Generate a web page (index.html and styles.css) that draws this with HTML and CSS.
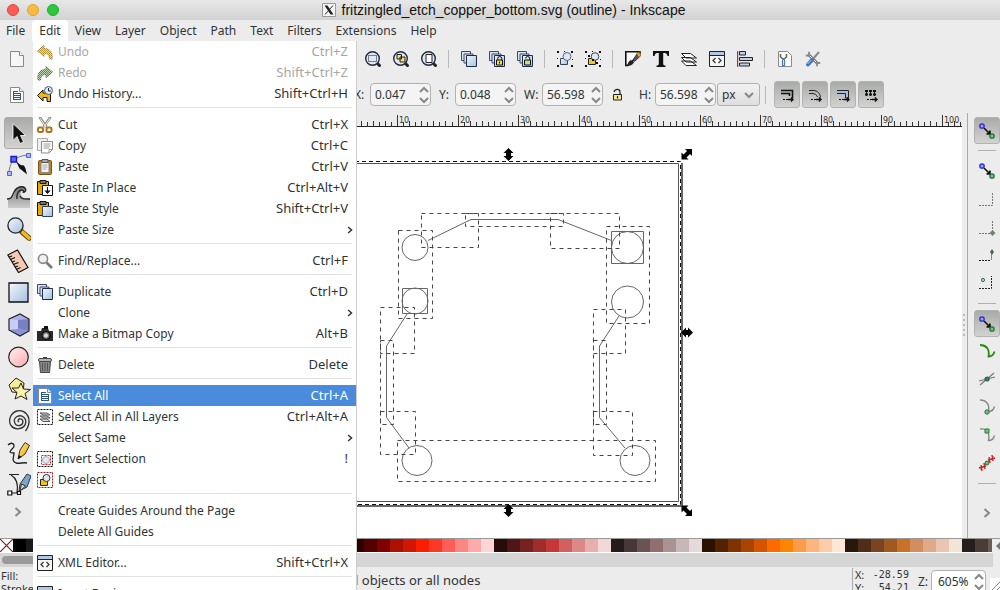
FILE: index.html
```html
<!DOCTYPE html>
<html lang="en">
<head>
<meta charset="utf-8">
<title>fritzingled_etch_copper_bottom.svg (outline) - Inkscape</title>
<link rel="stylesheet" href="styles.css">
</head>
<body>
<svg class="defs" aria-hidden="true">
  <defs>
    <linearGradient id="blue" x1="0" y1="0" x2="1" y2="1"><stop offset="0" stop-color="#f4f8fd"/><stop offset="1" stop-color="#a3bfe0"/></linearGradient>
    <linearGradient id="pink" x1="0" y1="0" x2="1" y2="1"><stop offset="0" stop-color="#fff0f0"/><stop offset="1" stop-color="#ffa9b0"/></linearGradient>
    <linearGradient id="gold" x1="0" y1="0" x2="1" y2="1"><stop offset="0" stop-color="#ffe680"/><stop offset="1" stop-color="#f0a800"/></linearGradient>
    <linearGradient id="sea" x1="0" y1="0" x2="0" y2="1"><stop offset="0" stop-color="#777"/><stop offset="1" stop-color="#ccc"/></linearGradient>
    <pattern id="stipple" width="2" height="2" patternUnits="userSpaceOnUse"><path d="M0 0h1v1H0zM1 1h1v1H1z" fill="#fff" fill-opacity=".6"/></pattern>
    <symbol id="page" viewBox="0 0 16 16"><path d="M1.500 .5h9l4 4v11h-13z" fill="#f6f6f4" stroke="#888a85"/><path d="M10.500 .5v4h4" fill="#fff" stroke="#888a85"/></symbol>
    <symbol id="doc" viewBox="0 0 16 16"><path d="M1.500 .5h9l4 4v11h-13z" fill="#fff" stroke="#888a85"/><path d="M10.500 .5v4h4" fill="#eee" stroke="#888a85"/><path d="M4 4.500h5M4 6.500h8M4 8.500h8M4 10.500h8M4 12.500h8M4.500 4v9M11.500 6v7" stroke="#2a5596" fill="none"/></symbol>
    <symbol id="undo" viewBox="0 0 16 16"><path d="M.5 7 7 1.500v3c5 0 9 3 8 10.500h-2.500c0-4-2-5.500-5.500-5.500v3z" fill="#b99b2e" stroke="#8f7a36"/><path d="M0 0h16v16H0z" fill="url(#stipple)"/></symbol>
    <symbol id="redo" viewBox="0 0 16 16"><path d="M15.500 7 9 1.500v3C4 4.500 0 7.500 1 15h2.500c0-4 2-5.500 5.500-5.500v3z" fill="#59933a" stroke="#476d33"/><path d="M0 0h16v16H0z" fill="url(#stipple)"/></symbol>
    <symbol id="history" viewBox="0 0 16 16"><path d="M.5 9.500 6 4v3h7.500v8.500H10V11.500H6V15z" fill="#f5b800" stroke="#111"/><circle cx="11.500" cy="4.500" r="4" fill="#dce8f6" stroke="#46597a"/><path d="M11.500 2v3h2.500" fill="none" stroke="#223"/></symbol>
    <symbol id="cut" viewBox="0 0 16 16"><path d="M2.500 0 9.500 10M13.500 0 6.500 10" stroke="#888a85" stroke-width="2.600"/><path d="M3 1 9 10M13 1 7 10" stroke="#eee"/><rect x="1" y="10.500" width="5" height="4.500" rx="1.500" fill="none" stroke="#b07418" stroke-width="2"/><rect x="9.500" y="10.500" width="5" height="4.500" rx="1.500" fill="none" stroke="#b07418" stroke-width="2"/></symbol>
    <symbol id="copy" viewBox="0 0 16 16"><path d="M.5 .5h10v12H.5z" fill="#f0f0ee" stroke="#aaa"/><path d="M4.500 3.500h11v8l-3.500 3.500H4.500z" fill="#fff" stroke="#888a85"/><path d="M6.500 6h7M6.500 8h7M6.500 10h6M12 15v-3.500h3.500" stroke="#999" fill="none"/></symbol>
    <symbol id="paste" viewBox="0 0 16 16"><rect x="1.500" y="1.500" width="13" height="14" rx="1" fill="#b5842b" stroke="#7c5310"/><path d="M4 3.500h8v10H4z" fill="#f3f3f1" stroke="#888"/><path d="M5 .5h6v3H5z" fill="#aaa" stroke="#555"/><path d="M5.500 6h5M5.500 8h5M5.500 10h4" stroke="#aaa"/></symbol>
    <symbol id="place" viewBox="0 0 16 16"><path d="M.5 1.500h11v13H.5z" fill="#eaa900" stroke="#111"/><path d="M3 .5h6v3H3z" fill="#777" stroke="#111"/><path d="M5.500 5.500h10v10h-10z" fill="#fff" stroke="#111"/><path d="M10.500 7v6M8 10.500l2.500 3 2.500-3" fill="#111" stroke="#111"/></symbol>
    <symbol id="style" viewBox="0 0 16 16"><path d="M.5 1.500h11v13H.5z" fill="#eaa900" stroke="#111"/><path d="M3 .5h6v3H3z" fill="#777" stroke="#111"/><path d="M5.500 5.500h10v10h-10z" fill="url(#blue)" stroke="#345"/></symbol>
    <symbol id="find" viewBox="0 0 16 16"><path d="m9.500 9.500 5.500 5.500" stroke="#777" stroke-width="2.600"/><circle cx="6" cy="5.800" r="4.600" fill="#eef2f7" stroke="#888a85" stroke-width="1.600"/></symbol>
    <symbol id="dup" viewBox="0 0 16 16"><path d="M.5 .5h9v9h-9z" fill="#d7e3f1" stroke="#3c4a66"/><path d="M3 3h9v9H3z" fill="#d7e3f1" stroke="#3c4a66"/><path d="M5.500 4.500h10v11h-10z" fill="url(#blue)" stroke="#1c2c4a"/></symbol>
    <symbol id="camera" viewBox="0 0 16 16"><path d="M0 5h4l1-3h6l1 3h4v10H0z" fill="#2a2a2a"/><path d="M7 0h4v3H7z" fill="#111"/><circle cx="9" cy="9.500" r="4" fill="#777" stroke="#000"/><circle cx="9" cy="9.500" r="2" fill="#ddd"/></symbol>
    <symbol id="trash" viewBox="0 0 16 16"><path d="M2.500 4.500h11l-1 11h-9z" fill="#888a85" stroke="#444"/><rect x="1.500" y="1.500" width="13" height="3" rx="1.500" fill="#b5b7b3" stroke="#444"/><path d="M5.500 6v8M8 6v8M10.500 6v8" stroke="#555"/><path d="M6 .5h4" stroke="#444"/></symbol>
    <symbol id="sellayers" viewBox="0 0 16 16"><path d="M.5 .5h15v15H.5z" fill="none" stroke="#111" stroke-dasharray="2 1"/><path d="M3 4h7l3 2H6zM3 7h7l3 2H6zM3 10h7l3 2.500H6z" fill="#ddd" stroke="#555"/></symbol>
    <symbol id="invert" viewBox="0 0 16 16"><path d="M.5 .5h15v15H.5z" fill="none" stroke="#111" stroke-dasharray="2 1"/><path d="M4.500 4.500h9v9h-9z" fill="none" stroke="#c22" stroke-dasharray="2 1"/><circle cx="9" cy="9" r="3.500" fill="#e4e8f0" stroke="#a5adbb"/></symbol>
    <symbol id="desel" viewBox="0 0 16 16"><path d="M.5 .5h15v15H.5z" fill="none" stroke="#a11" stroke-dasharray="2 1"/><path d="M3.500 7.500h7v6h-7z" fill="#f5c400" stroke="#222"/><circle cx="9.500" cy="6" r="3.500" fill="#dce8f6" stroke="#335"/></symbol>
    <symbol id="xml" viewBox="0 0 16 16"><path d="M.5 .5h15v15H.5z" fill="#f6f6f6" stroke="#222"/><path d="M1 1h14v3H1z" fill="#b4c8e4"/><path d="M1 4.500h14" stroke="#222"/><path d="M6.500 7 4 9.500 6.500 12M9.500 7 12 9.500 9.500 12" fill="none" stroke="#333" stroke-width="1.200"/></symbol>
    <symbol id="zoom" viewBox="0 0 16 16"><path d="m12 12 3.500 3.500" stroke="#222" stroke-width="3"/><circle cx="7.500" cy="7.500" r="6.800" fill="#dfe9f5" stroke="#1f2a3c" stroke-width="1.400"/></symbol>
    <symbol id="zoomsel" viewBox="0 0 16 16"><use href="#zoom"/><path d="M3.500 4.500h8v6h-8z" fill="none" stroke="#111" stroke-dasharray="1 1"/></symbol>
    <symbol id="zoomdraw" viewBox="0 0 16 16"><use href="#zoom"/><path d="M4 3.500h4.500V8H4zM7 6h5v5H7z" fill="#f8db7a" stroke="#222"/></symbol>
    <symbol id="zoompage" viewBox="0 0 16 16"><use href="#zoom"/><path d="M5 3.500h6v8H5z" fill="#fff" stroke="#222"/></symbol>
    <symbol id="clone" viewBox="0 0 16 16"><use href="#dup"/><path d="M7.500 9h6v5h-6z" fill="#f8dc45" stroke="#111"/><path d="M8.700 9V7.500a2 2 0 0 1 4 0V9M10.500 10.500v2" fill="none" stroke="#111"/></symbol>
    <symbol id="unlink" viewBox="0 0 16 16"><use href="#dup"/><path d="M7.500 9h6v5h-6z" fill="#c5e08a" stroke="#111"/><path d="M8.700 7.500a2 2 0 0 1 4 0V9" fill="none" stroke="#111"/></symbol>
    <symbol id="corners" viewBox="0 0 16 16"><path d="M0 0h2v2H0zM14 0h2v2h-2zM0 14h2v2H0zM14 14h2v2h-2zM7 0h1v1H7zM0 7h1v1H0zM15 8h1v1h-1z" fill="#111"/></symbol>
    <symbol id="group" viewBox="0 0 16 16"><use href="#corners"/><path d="M3.500 7.500h7v6h-7z" fill="url(#blue)" stroke="#345"/><circle cx="10" cy="5.500" r="4" fill="#dce8f6" stroke="#567"/></symbol>
    <symbol id="ungroup" viewBox="0 0 16 16"><use href="#corners"/><path d="M3.500 7.500h7v6h-7z" fill="#f5c820" stroke="#222"/><circle cx="10" cy="5.500" r="3.800" fill="#dce8f6" stroke="#444"/><path d="M7 8h2v2H7zM3 4h2v2H3zM11 11h2v2h-2z" fill="#111"/></symbol>
    <symbol id="fill" viewBox="0 0 16 16"><path d="M.8 .8h13v3L3 14.500H.8z" fill="#fff" stroke="#111" stroke-width="1.600"/><path d="M1 15c2-1 2-5 5-6l3 2c-1 3-4 4-8 4z" fill="#222"/><path d="m8 9 5-8 2.500-1v5L9.500 10.500z" fill="#555" stroke="#111" stroke-width=".6"/><path d="m13 1 3 3-2 2-2-3z" fill="#f3a90d"/></symbol>
    <symbol id="text" viewBox="0 0 16 16"><path d="M0 0h16v5h-1.500C14 2.500 13 2 10.200 2v10.500c0 1.500.6 2 2.300 2V16h-9v-1.500c1.700 0 2.300-.5 2.300-2V2C3 2 2 2.500 1.500 5H0z" fill="#111"/></symbol>
    <symbol id="layers" viewBox="0 0 16 16"><path d="M.5 10h9l6 4.500H5zM.5 6.500h9L15.500 11H5zM.5 2.500h9l6 4.500H5z" fill="#fff" stroke="#222"/></symbol>
    <symbol id="align" viewBox="0 0 16 16"><path d="M.5 0v16" stroke="#c22" stroke-width="1.400"/><path d="M2.500 .5h6v3.500h-6zM2.500 6.500h13v3h-13zM2.500 12h10v3h-10z" fill="#bcd2ea" stroke="#222"/></symbol>
    <symbol id="docprefs" viewBox="0 0 16 16"><path d="M1.500 .5h9l4 4v11h-13z" fill="#fff" stroke="#888a85"/><path d="M3.500 3v3L6.500 8.500 9.500 6V3" fill="none" stroke="#666" stroke-width="1.600"/><path d="M6.500 10v4" stroke="#4a7ab8" stroke-width="3.400" stroke-linecap="round"/><path d="M6.500 9v5" stroke="#cfe0f5"/></symbol>
    <symbol id="prefs" viewBox="0 0 16 16"><path d="m3.500 3.500 9 9" stroke="#777" stroke-width="3"/><path d="m4 4 8 8" stroke="#eee"/><path d="M.8 4.500H4V.8M12 15.200V12h3.200" stroke="#888" stroke-width="1.800" fill="none"/><path d="m14 1-6 7" stroke="#888" stroke-width="2"/><path d="m7 9-4 4.500" stroke="#3a73c4" stroke-width="3.800" stroke-linecap="round"/><path d="m6.500 9-4 4" stroke="#bcd4f3"/></symbol>
    <symbol id="lock" viewBox="0 0 16 16"><path d="M4.500 7.500h8v5.500h-8z" fill="#f8e88c" stroke="#222"/><path d="M5 5c1-3.500 6-3.500 6 0v2.500M8.500 9v2.500" stroke="#222" fill="none" stroke-width="1.200"/></symbol>
    <symbol id="dots" viewBox="0 0 16 16"><path d="M4 12.500h6" stroke="#111" stroke-dasharray="2 1"/><path d="M9 12.500h5M12 10.500l2 2-2 2" fill="none" stroke="#111" stroke-width="1.400"/></symbol>
    <symbol id="a1" viewBox="0 0 16 16"><path d="M2 3.500h11.500V11M2 6.500h8.500V9" stroke="#111" stroke-width="1.600" fill="none"/><use href="#dots"/></symbol>
    <symbol id="a2" viewBox="0 0 16 16"><path d="M2 3.500h4c5 0 7 3 7.500 7M2 6.500h3c3 0 5 1.500 5.500 3.500" stroke="#222" fill="none"/><use href="#dots"/></symbol>
    <symbol id="a3" viewBox="0 0 16 16"><path d="M2 3.500h11.500V11h-3V6.500H2" stroke="#222" fill="#9fc0e8"/><use href="#dots"/></symbol>
    <symbol id="a4" viewBox="0 0 16 16"><path d="M2 4h12M2 7.500h12" stroke="#111" stroke-dasharray="3 1" stroke-width="2.200"/><path d="M3.500 3v6M7.500 3v6M11.500 3v6" stroke="#111"/><use href="#dots"/></symbol>
    <symbol id="snap" viewBox="0 0 18 18"><path d="m6 6 6 6M12 8.500V12H8.500" stroke="#111" stroke-width="1.600" fill="#111"/><circle cx="4" cy="4" r="2.200" fill="#9c9cff" stroke="#2a2ad0" stroke-width="1.300"/><circle cx="14" cy="14" r="2.200" fill="#7bb98a" stroke="#26753b" stroke-width="1.300"/></symbol>
    <symbol id="s1" viewBox="0 0 18 18"><path d="M1 15.500h13.500V2" stroke="#777" fill="none" stroke-dasharray="2 1"/></symbol>
    <symbol id="s2" viewBox="0 0 18 18"><path d="M1 15.500h13.500V2" stroke="#777" fill="none" stroke-dasharray="2 1"/><path d="m14.500 12 3 3-3 3-3-3z" fill="#6c8571"/></symbol>
    <symbol id="s3" viewBox="0 0 18 18"><path d="M1 14.500h12" stroke="#222" fill="none" stroke-dasharray="2 1"/><path d="M13.500 14V8" stroke="#888"/><path d="m14 3 2 3-2 3-2-3z" fill="#4a654f"/></symbol>
    <symbol id="s4" viewBox="0 0 18 18"><path d="M1 14.500h12.500V2" stroke="#222" fill="none" stroke-dasharray="2 1"/><circle cx="5" cy="6" r="1.600" fill="#b6d3bd" stroke="#4a654f"/></symbol>
    <symbol id="p1" viewBox="0 0 18 18"><path d="M2 3c6 0 10 4 8.500 11.500 3 0 5-1 6-5" fill="none" stroke="#2a8a12" stroke-width="1.800"/></symbol>
    <symbol id="p2" viewBox="0 0 18 18"><path d="M2 15 16 3M1 11l16-4" stroke="#777" stroke-width="1.200"/><circle cx="9" cy="9" r="2" fill="#46a" stroke="#26752b" stroke-width="1.200"/></symbol>
    <symbol id="p3" viewBox="0 0 18 18"><path d="M2 2c6 0 10 4 8.500 11.500 3 0 5-1 6-5" fill="none" stroke="#888" stroke-width="1.400"/><circle cx="9" cy="14" r="2.200" fill="#7bb98a" stroke="#26753b"/></symbol>
    <symbol id="p4" viewBox="0 0 18 18"><path d="M2 3c7-1 10 4 8.500 11.500 3 0 5-1 6-5" fill="none" stroke="#888" stroke-width="1.400"/><path d="M7 3h4v4H7z" fill="#7bb98a" stroke="#1c8a1c"/></symbol>
    <symbol id="p5" viewBox="0 0 18 18"><path d="M2 16 16 2" stroke="#999"/><path d="m3 11 1 6M6 9l1 6M1 14l7-2M11 3l1 6M14 1l1 6M10 6l7-2" stroke="#c22" stroke-width="1.400"/><circle cx="9" cy="9" r="2" fill="#7bb98a" stroke="#26753b"/></symbol>
    <symbol id="right" viewBox="0 0 16 16"><path d="m5.500 4 4.500 4-4.500 4" fill="none" stroke="currentColor" stroke-width="2"/></symbol>
    <symbol id="t-arrow" viewBox="0 0 24 24"><path d="M6 2.500v17l4-4 3 7 3.500-1.500-3-6.500h5z" fill="#111" stroke="#fff" stroke-width=".8"/></symbol>
    <symbol id="t-node" viewBox="0 0 24 24"><path d="M2 21C2 10 7 3 21 2" fill="none" stroke="#777"/><path d="M.5 18.500h4v4h-4zM19.500 .5h4v4h-4z" fill="#aab4ff" stroke="#5560d8"/><path d="M4 3.500h5.500V9H4z" fill="#5a6cf0" stroke="#1818c8" stroke-width="1.400"/><path d="m9 8 3.500 7.500 1.500 1 6 5-1.500-6-1.500-3-3.500-.5z" fill="#111"/></symbol>
    <symbol id="t-tweak" viewBox="0 0 24 24"><path d="M1 23V14c5 0 5-4 7-8 2-5 8-5 10-3 2 1.500 1 5-1.500 4 .5-2-2.500-2-3 1 0 4 3 6 9.500 6v9z" fill="url(#sea)"/><path d="M0 14c5 0 5-3 7-7 3-6 9-6 11-4 2 2 0 5-2.500 4M10 14c-1-9 6-11 7-7M13 11c1 3 4 3 10 3" fill="none" stroke="#222" stroke-width="1.300"/></symbol>
    <symbol id="t-zoom" viewBox="0 0 24 24"><path d="m15 15 7 6" stroke="#6b4b00" stroke-width="5.500" stroke-linecap="round"/><path d="m16 15.500 6 5.500" stroke="#f4b91c" stroke-width="3.600" stroke-linecap="round"/><circle cx="8.500" cy="8.500" r="7.600" fill="url(#blue)" stroke="#222" stroke-width="1.300"/></symbol>
    <symbol id="t-measure" viewBox="0 0 24 24"><path d="m.8 6 9.700-5L21 18.500 11.500 23.500z" fill="#f5c9b3" stroke="#111" stroke-width="1.200"/><path d="m2 8 3-1M3.500 10.500 8 8.500M5 13l3-1M6.500 15.500l5-2M8 18l3-1M9.500 20.500l4-2" stroke="#111" stroke-width="1.200"/></symbol>
    <symbol id="t-rect" viewBox="0 0 24 24"><path d="M2 2h19v19H2z" fill="url(#blue)" stroke="#111" stroke-width="1.300"/></symbol>
    <symbol id="t-box" viewBox="0 0 24 24"><path d="M2 6 13 1l9 5v12l-9 5-11-6z" fill="#8c93d8"/><path d="m2 6 9-1.500V16l-9 1z" fill="#c9cdf5"/><path d="m11 4.500 11 1.500v12l-11-3z" fill="#7880c4"/><path d="M2 6 13 1l9 5-11 1z" fill="#aab0ea"/><path d="M2 6 13 1l9 5v12l-9 5-11-6z" fill="none" stroke="#222" stroke-width="1.200"/></symbol>
    <symbol id="t-circle" viewBox="0 0 24 24"><circle cx="11.500" cy="12" r="9.800" fill="url(#pink)" stroke="#222" stroke-width="1.200"/></symbol>
    <symbol id="t-star" viewBox="0 0 24 24"><path d="M2 8 9 1l8 5-1 10-11-1z" fill="#f7ec98" stroke="#222"/><path d="m14 6 2.500 6 7 .5-5.500 4 2 6-6-3.500-6 3 2-6.500-5-4.500h6.500z" fill="#fbf3a5" stroke="#222"/></symbol>
    <symbol id="t-spiral" viewBox="0 0 24 24"><path d="M12 13c-2-1-.5-4 2-3 3 1 2.500 6-1.500 6.500C7 17 5.500 10 10 7.500c5-2.500 10 2 8.500 7C17 20 8 22 4 16.500.5 11 4 3.500 10 2c7-1.500 14 4 11.500 14-.5 2-1.500 4-3 6" fill="none" stroke="#333" stroke-width="1.300"/></symbol>
    <symbol id="t-pencil" viewBox="0 0 24 24"><path d="M1 4c4-4 8 0 5 3-4 4-4 5 1 5 0 4-3 8 2 10 4 1 7-1 11 0" fill="none" stroke="#222" stroke-width="1.300"/><path d="m11 18 2-9 5-7.500 4.500 3L18 13z" fill="url(#gold)" stroke="#333"/><path d="m11 18 .8-4 3 2z" fill="#111"/></symbol>
    <symbol id="t-pen" viewBox="0 0 24 24"><path d="M2 1.500h10M4 2c7 4 7 12 6 18H3" fill="none" stroke="#222" stroke-width="1.200"/><path d="M.8 18h4v4h-4zM10.500 18.500h3v3h-3z" fill="#fff" stroke="#111" stroke-width="1.200"/><path d="m12 18 1-7 7-10 4 2-4 11z" fill="#7ba6cc" stroke="#333"/><path d="m13 18 1.500-7 4 2z" fill="#ddd" stroke="#333"/></symbol>
  </defs>
</svg>

<div class="app">
  <header class="titlebar">
    <div class="lights"><span class="light light-close"></span><span class="light light-min"></span><span class="light light-max"></span></div>
    <h1 class="title">
      <svg class="x11" viewBox="0 0 14 14" aria-hidden="true"><path d="M.5 .5h13v13H.5z" fill="#f6f6f6" stroke="#999"/><path d="M2.500 2.500h3l6 9h-3z" fill="#222"/><path d="M11 2.500 3 11.500" stroke="#222"/></svg>
      fritzingled_etch_copper_bottom.svg (outline) - Inkscape
    </h1>
  </header>

  <nav class="menubar">
    <button class="menu-title">File</button><button class="menu-title is-open">Edit</button><button class="menu-title">View</button><button class="menu-title">Layer</button><button class="menu-title">Object</button><button class="menu-title">Path</button><button class="menu-title">Text</button><button class="menu-title">Filters</button><button class="menu-title">Extensions</button><button class="menu-title">Help</button>
  </nav>

  <div class="toolbar commands">
    <button class="tool-btn lead" aria-label="New"><svg class="i16"><use href="#page"/></svg></button>
    <button class="tool-btn" aria-label="Zoom selection"><svg class="i16"><use href="#zoomsel"/></svg></button>
    <button class="tool-btn" aria-label="Zoom drawing"><svg class="i16"><use href="#zoomdraw"/></svg></button>
    <button class="tool-btn" aria-label="Zoom page"><svg class="i16"><use href="#zoompage"/></svg></button>
    <span class="vsep"></span>
    <button class="tool-btn" aria-label="Duplicate"><svg class="i16"><use href="#dup"/></svg></button>
    <button class="tool-btn" aria-label="Clone"><svg class="i16"><use href="#clone"/></svg></button>
    <button class="tool-btn" aria-label="Unlink clone"><svg class="i16"><use href="#unlink"/></svg></button>
    <span class="vsep"></span>
    <button class="tool-btn" aria-label="Group"><svg class="i16"><use href="#group"/></svg></button>
    <button class="tool-btn" aria-label="Ungroup"><svg class="i16"><use href="#ungroup"/></svg></button>
    <span class="vsep"></span>
    <button class="tool-btn" aria-label="Fill and stroke"><svg class="i16"><use href="#fill"/></svg></button>
    <button class="tool-btn" aria-label="Text and font"><svg class="i16"><use href="#text"/></svg></button>
    <button class="tool-btn" aria-label="Layers"><svg class="i16"><use href="#layers"/></svg></button>
    <button class="tool-btn" aria-label="XML editor"><svg class="i16"><use href="#xml"/></svg></button>
    <button class="tool-btn" aria-label="Align"><svg class="i16"><use href="#align"/></svg></button>
    <span class="vsep"></span>
    <button class="tool-btn" aria-label="Document properties"><svg class="i16"><use href="#docprefs"/></svg></button>
    <button class="tool-btn" aria-label="Preferences"><svg class="i16"><use href="#prefs"/></svg></button>
  </div>

  <div class="toolbar controls">
    <button class="tool-btn lead" aria-label="Select all"><svg class="i16"><use href="#doc"/></svg></button>
    <div class="field"><label for="fx">X:</label><span class="spin"><input id="fx" value="0.047"><svg class="arrows" viewBox="0 0 12 20"><path d="m2 7 4-4 4 4M2 13l4 4 4-4"/></svg></span></div>
    <div class="field"><label for="fy">Y:</label><span class="spin"><input id="fy" value="0.048"><svg class="arrows" viewBox="0 0 12 20"><path d="m2 7 4-4 4 4M2 13l4 4 4-4"/></svg></span></div>
    <div class="field"><label for="fw">W:</label><span class="spin"><input id="fw" value="56.598"><svg class="arrows" viewBox="0 0 12 20"><path d="m2 7 4-4 4 4M2 13l4 4 4-4"/></svg></span></div>
    <button class="lock-btn" aria-label="Lock ratio"><svg class="i16"><use href="#lock"/></svg></button>
    <div class="field"><label for="fh">H:</label><span class="spin"><input id="fh" value="56.598"><svg class="arrows" viewBox="0 0 12 20"><path d="m2 7 4-4 4 4M2 13l4 4 4-4"/></svg></span></div>
    <span class="unit"><select aria-label="Unit"><option>px</option></select><svg class="caret" viewBox="0 0 10 8"><path d="m1 2 4 4 4-4"/></svg></span>
    <span class="vsep"></span>
    <div class="affect">
      <button class="toggle" aria-label="Scale stroke"><svg class="i16"><use href="#a1"/></svg></button>
      <button class="toggle" aria-label="Scale corners"><svg class="i16"><use href="#a2"/></svg></button>
      <button class="toggle" aria-label="Move gradients"><svg class="i16"><use href="#a3"/></svg></button>
      <button class="toggle" aria-label="Move patterns"><svg class="i16"><use href="#a4"/></svg></button>
    </div>
  </div>

  <main class="workspace">
    <aside class="toolbox">
      <button class="tool is-on" aria-label="Selector"><svg class="i24"><use href="#t-arrow"/></svg></button>
      <button class="tool" aria-label="Node"><svg class="i24"><use href="#t-node"/></svg></button>
      <button class="tool" aria-label="Tweak"><svg class="i24"><use href="#t-tweak"/></svg></button>
      <button class="tool" aria-label="Zoom"><svg class="i24"><use href="#t-zoom"/></svg></button>
      <button class="tool" aria-label="Measure"><svg class="i24"><use href="#t-measure"/></svg></button>
      <button class="tool" aria-label="Rectangle"><svg class="i24"><use href="#t-rect"/></svg></button>
      <button class="tool" aria-label="3D box"><svg class="i24"><use href="#t-box"/></svg></button>
      <button class="tool" aria-label="Ellipse"><svg class="i24"><use href="#t-circle"/></svg></button>
      <button class="tool" aria-label="Star"><svg class="i24"><use href="#t-star"/></svg></button>
      <button class="tool" aria-label="Spiral"><svg class="i24"><use href="#t-spiral"/></svg></button>
      <button class="tool" aria-label="Pencil"><svg class="i24"><use href="#t-pencil"/></svg></button>
      <button class="tool" aria-label="Pen"><svg class="i24"><use href="#t-pen"/></svg></button>
      <button class="more" aria-label="More tools"><svg class="i16"><use href="#right"/></svg></button>
    </aside>

    <section class="document">
      <svg class="ruler" id="ruler"></svg>
      <svg class="canvas">
        <g transform="translate(-33 -127)">
          <g class="frame">
            <path class="thick" d="M33 506H682V163"/>
            <path d="M33 163.500H678.500V501.500H33"/>
            <path class="dash-b" d="M33 161.500H680.500V504.500H33"/>
          </g>
          <g class="outline">
            <circle cx="415" cy="247.500" r="13"/><circle cx="415" cy="301" r="13"/><path d="M402.500 288.500h25v25h-25z"/>
            <circle cx="627.500" cy="247.500" r="16"/><path d="M611.500 231.500h32v32h-32z"/><circle cx="627.500" cy="302" r="16"/>
            <circle cx="417" cy="460.500" r="15"/><circle cx="635" cy="460.500" r="15"/>
            <path d="M428 240.500 471 219.500H558L611.500 240.500"/>
            <path d="M407 314 386.500 346V417.500L409 448"/>
            <path d="M619 316 599.500 346V417.500L625 448"/>
          </g>
          <g class="boxes">
            <path d="M421.500 213.500h57v34h-57z"/><path d="M465.500 213.500h98v13h-98z"/><path d="M550.500 213.500h69v35h-69z"/>
            <path d="M398.500 230.500h34v88h-34z"/><path d="M606.500 226.500h43v97h-43z"/>
            <path d="M380.500 307.500h34v46h-34z"/><path d="M380.500 340.500h13v84h-13z"/><path d="M380.500 411.500h35v43h-35z"/>
            <path d="M397.500 440.500h258v41h-258z"/>
            <path d="M593.500 309.500h32v44h-32z"/><path d="M593.500 340.500h13v84h-13z"/><path d="M593.500 411.500h39v44h-39z"/>
          </g>
          <g class="handles">
            <path d="m508.500 148 5 5h-2.500v3h2.500l-5 5-5-5h2.500v-3h-2.500z"/>
            <path d="m508.500 504 5 5h-2.500v3h2.500l-5 5-5-5h2.500v-3h-2.500z"/>
            <path d="m681 332.500 5-5v2.500h2v-2.500l5 5-5 5V335h-2v2.500z"/>
            <path d="M685 149h7v7l-2-2-3.500 3.500 2 2H681.500v-7l2 2 3.500-3.500z"/>
            <path d="M685 516h7v-7l-2 2-3.500-3.500 2-2H681.500v7l2-2 3.500 3.500z"/>
          </g>
        </g>
      </svg>
    </section>

    <div class="grip"></div>

    <aside class="snapbar">
      <button class="toggle" aria-label="Enable snapping"><svg class="i18"><use href="#snap"/></svg></button>
      <span class="hsep"></span>
      <button class="snap" aria-label="Snap bounding box"><svg class="i18"><use href="#snap"/></svg></button>
      <button class="snap" aria-label="Snap edges"><svg class="i18"><use href="#s1"/></svg></button>
      <button class="snap" aria-label="Snap corners"><svg class="i18"><use href="#s2"/></svg></button>
      <button class="snap" aria-label="Snap edge midpoints"><svg class="i18"><use href="#s3"/></svg></button>
      <button class="snap" aria-label="Snap centers"><svg class="i18"><use href="#s4"/></svg></button>
      <span class="hsep"></span>
      <button class="toggle" aria-label="Snap nodes"><svg class="i18"><use href="#snap"/></svg></button>
      <button class="snap" aria-label="Snap to paths"><svg class="i18"><use href="#p1"/></svg></button>
      <button class="snap" aria-label="Snap intersections"><svg class="i18"><use href="#p2"/></svg></button>
      <button class="snap" aria-label="Snap cusp nodes"><svg class="i18"><use href="#p3"/></svg></button>
      <button class="snap" aria-label="Snap smooth nodes"><svg class="i18"><use href="#p4"/></svg></button>
      <button class="snap" aria-label="Snap midpoints"><svg class="i18"><use href="#p5"/></svg></button>
      <span class="hsep"></span>
      <button class="more" aria-label="More snapping"><svg class="i16"><use href="#right"/></svg></button>
    </aside>
  </main>

  <div class="palette-row">
    <div class="palette" id="palette"><svg class="none" viewBox="0 0 13 13"><path d="M0 0h13v13H0z" fill="#fff"/><path d="m0 0 13 13M13 0 0 13" stroke="#8b1a1a" stroke-width="1.200"/></svg></div>
    <button class="palette-menu" aria-label="Palette menu"><svg viewBox="0 0 8 10"><path d="M8 1 4 5l4 4" fill="#777"/></svg></button>
  </div>
  <div class="scroll"><span class="thumb"></span></div>

  <footer class="status">
    <div class="paint"><span>Fill:</span><span>Stroke:</span></div>
    <p class="message">Select all objects or all nodes</p>
    <dl class="coords"><dt>X:</dt><dd>-28.59</dd><dt>Y:</dt><dd>54.21</dd></dl>
    <div class="zoom-field"><label for="fz">Z:</label><span class="spin"><input id="fz" value="605%"><svg class="arrows" viewBox="0 0 12 20"><path d="m2 7 4-4 4 4M2 13l4 4 4-4"/></svg></span></div>
    <svg class="resize" viewBox="0 0 10 12"><path d="M0 0h10v12H0z" fill="#fff"/><path d="m2 12 8-8M7 12l3-3" stroke="#888"/></svg>
  </footer>

  <div class="menu" role="menu">
    <button class="item" disabled><svg class="i16"><use href="#undo"/></svg><span>Undo</span><kbd>Ctrl+Z</kbd></button>
    <button class="item" disabled><svg class="i16"><use href="#redo"/></svg><span>Redo</span><kbd>Shift+Ctrl+Z</kbd></button>
    <button class="item"><svg class="i16"><use href="#history"/></svg><span>Undo History...</span><kbd>Shift+Ctrl+H</kbd></button>
    <hr>
    <button class="item"><svg class="i16"><use href="#cut"/></svg><span>Cut</span><kbd>Ctrl+X</kbd></button>
    <button class="item"><svg class="i16"><use href="#copy"/></svg><span>Copy</span><kbd>Ctrl+C</kbd></button>
    <button class="item"><svg class="i16"><use href="#paste"/></svg><span>Paste</span><kbd>Ctrl+V</kbd></button>
    <button class="item"><svg class="i16"><use href="#place"/></svg><span>Paste In Place</span><kbd>Ctrl+Alt+V</kbd></button>
    <button class="item"><svg class="i16"><use href="#style"/></svg><span>Paste Style</span><kbd>Shift+Ctrl+V</kbd></button>
    <button class="item sub"><span>Paste Size</span><svg class="i12"><use href="#right"/></svg></button>
    <hr>
    <button class="item"><svg class="i16"><use href="#find"/></svg><span>Find/Replace...</span><kbd>Ctrl+F</kbd></button>
    <hr>
    <button class="item"><svg class="i16"><use href="#dup"/></svg><span>Duplicate</span><kbd>Ctrl+D</kbd></button>
    <button class="item sub"><span>Clone</span><svg class="i12"><use href="#right"/></svg></button>
    <button class="item"><svg class="i16"><use href="#camera"/></svg><span>Make a Bitmap Copy</span><kbd>Alt+B</kbd></button>
    <hr>
    <button class="item"><svg class="i16"><use href="#trash"/></svg><span>Delete</span><kbd>Delete</kbd></button>
    <hr>
    <button class="item is-active"><svg class="i16"><use href="#doc"/></svg><span>Select All</span><kbd>Ctrl+A</kbd></button>
    <button class="item"><svg class="i16"><use href="#sellayers"/></svg><span>Select All in All Layers</span><kbd>Ctrl+Alt+A</kbd></button>
    <button class="item sub"><span>Select Same</span><svg class="i12"><use href="#right"/></svg></button>
    <button class="item"><svg class="i16"><use href="#invert"/></svg><span>Invert Selection</span><kbd>!</kbd></button>
    <button class="item"><svg class="i16"><use href="#desel"/></svg><span>Deselect</span></button>
    <hr>
    <button class="item bare"><span>Create Guides Around the Page</span></button>
    <button class="item bare"><span>Delete All Guides</span></button>
    <hr>
    <button class="item"><svg class="i16"><use href="#xml"/></svg><span>XML Editor...</span><kbd>Shift+Ctrl+X</kbd></button>
    <hr>
    <button class="item"><svg class="i16"><use href="#xml"/></svg><span>Input Devices...</span></button>
  </div>
</div>
<script src="main.js"></script>
</body>
</html>
```
FILE: styles.css
```css
* { box-sizing: border-box; }
body { margin: 0; font: 13px/21px "Noto Sans", "Open Sans", sans-serif; color: #2e3436; background: #ececec; }
button, input, select { font: inherit; color: inherit; }
button { border: 0; padding: 0; background: none; }
svg { display: block; flex: none; }
.defs { position: absolute; width: 0; height: 0; }
.i12 { width: 12px; height: 12px; }
.i16 { width: 16px; height: 16px; }
.i18 { width: 18px; height: 18px; }
.i24 { width: 24px; height: 24px; }
.app { position: relative; display: flex; flex-direction: column; height: 100vh; overflow: hidden; }

.titlebar { flex: none; display: flex; align-items: center; height: 20px; background: linear-gradient(#e8e8e8, #d2d2d2); }
.lights { display: flex; gap: 8px; padding-left: 7px; flex: 1; }
.light { width: 12px; height: 12px; border-radius: 50%; border: 1px solid; }
.light-close { background: #fc5b57; border-color: #e2443f; }
.light-min { background: #fdbc40; border-color: #e0a133; }
.light-max { background: #2bc840; border-color: #1fad2e; }
.title { display: flex; align-items: center; gap: 6px; margin: 0; font: 14px/20px "Liberation Sans", Arial, sans-serif; color: #111; white-space: nowrap; }
.titlebar::after { content: ""; flex: 1; }
.x11 { width: 14px; height: 14px; }

.menubar { flex: none; display: flex; height: 21px; font-size: 12px; }
.menu-title { padding: 0 7px; line-height: 21px; border-radius: 4px 4px 0 0; }
.menu-title:first-child { padding-left: 6px; }
.menu-title.is-open { background: #fff; }

.toolbar { flex: none; display: flex; align-items: center; height: 36px; padding-left: 3px; }
.tool-btn { flex: none; display: grid; place-items: center; width: 28px; height: 28px; }
.commands .lead { margin-right: 328px; }
.controls { padding-bottom: 1px; }
.controls .lead { margin-right: 323px; }
.vsep { flex: none; width: 1px; height: 18px; margin: 0 6px 0 5px; background: #b8b8b8; }
.field { flex: none; display: flex; align-items: center; margin-right: 8px; font-size: 12px; }
.field label { width: 15px; margin-right: 1px; white-space: nowrap; }
.field label[for="fw"] { width: 17px; }
.spin { position: relative; display: block; width: 61px; height: 23px; flex: none; }
.spin input { width: 100%; height: 100%; padding: 0 16px 0 4px; font-size: 12px; border: 1px solid #b2b2b2; border-radius: 4px; background: #f4f4f4; }
.arrows { position: absolute; right: 1px; top: 2px; width: 12px; height: 20px; fill: none; stroke: #888; stroke-width: 2; }
.lock-btn { width: 16px; margin: 0 14px 0 -2px; }
.controls .field:nth-of-type(4) { margin-right: 1px; }
.unit { position: relative; display: block; width: 43px; height: 23px; flex: none; font-size: 12px; }
.unit select { appearance: none; width: 100%; height: 100%; padding: 0 4px; border: 1px solid #b2b2b2; border-radius: 3px; background: linear-gradient(#f2f2f2, #dedede); }
.caret { position: absolute; right: 6px; top: 8px; width: 10px; height: 8px; fill: none; stroke: #888; stroke-width: 2; }
.affect { display: flex; gap: 2px; padding-left: 2px; }
.toggle { flex: none; display: grid; place-items: center; width: 26px; height: 27px; border: 1px solid #b2b2b2; border-radius: 3px; background: linear-gradient(#a9aba8, #d2d3d1); }

.workspace { flex: 1; min-height: 0; display: flex; }
.toolbox { flex: none; width: 33px; padding: 4px 0 0 4px; }
.tool { display: grid; place-items: center; width: 30px; height: 32px; }
.tool.is-on { border: 1px solid #aaa; border-radius: 3px; background: linear-gradient(#a9aba8, #d2d3d1); }
.more { display: grid; place-items: center; width: 28px; height: 22px; color: #888; }
.document { flex: 1; min-width: 0; display: flex; flex-direction: column; }
.ruler { width: 100%; height: 14px; border-bottom: 1px solid #222; fill: #333; font: 8px "DejaVu Sans", sans-serif; }
.canvas { width: 100%; flex: 1; min-height: 0; background: #fff; fill: none; stroke: #333; }
.thick { stroke: #666; stroke-width: 2; }
.frame { stroke: #555; }
.dash-b { stroke: #111; stroke-dasharray: 4 3; }
.outline { stroke: #666; }
.boxes { stroke: #444; stroke-dasharray: 4 4; }
.handles { fill: #000; stroke: none; }
.grip { flex: none; width: 5px; display: grid; align-content: center; }
.grip::before { content: ""; width: 2px; height: 24px; margin-left: 1px; background: repeating-linear-gradient(#bbb 0 2px, #ececec 2px 5px); }
.snapbar { flex: none; width: 33px; padding: 4px 0 0 6px; border-left: 1px solid #aaa; }
.snap { display: grid; place-items: center; width: 26px; height: 28px; }
.hsep { display: block; width: 18px; height: 1px; margin: 6px 0 6px 4px; background: #b0b0b0; }
.snapbar .more { width: 26px; margin-top: 18px; }

.palette-row { flex: none; display: flex; height: 15px; padding-top: 1px; background: linear-gradient(#999 0 1px, #fff 1px); }
.palette { flex: 1; display: flex; overflow: hidden; height: 13px; }
.palette span, .none { flex: none; width: 13px; height: 13px; }
.palette-menu { flex: none; width: 8px; background: #ececec; }
.scroll { flex: none; height: 14px; margin-right: 7px; padding: 3px 0 0 2px; background: #d5d5d5; }
.thumb { display: block; width: 200px; height: 8px; border-radius: 4px; background: #9a9a9a; }

.status { flex: none; display: flex; align-items: flex-start; height: 23px; overflow: hidden; font-size: 12px; }
.paint { width: 270px; padding: 2px 0 0 1px; font-size: 11px; line-height: 13px; }
.paint span { display: block; }
.message { flex: 1; margin: 3px 0 0 35px; font-size: 13px; line-height: 21px; }
.coords { flex: none; display: grid; grid-template-columns: 16px 38px; margin: 1px 9px 0 0; padding-left: 2px; border-left: 1px solid #aaa; font-size: 11px; line-height: 13px; }
.coords dd { margin: 0; text-align: right; font: 10px/13px "DejaVu Sans Mono", monospace; }
.zoom-field { flex: none; display: flex; align-items: center; gap: 3px; padding-top: 3px; }
.zoom-field .spin { width: 55px; }
.zoom-field .spin input { padding-left: 6px; background: #fff; }
.resize { width: 10px; height: 12px; margin: 11px 0 0 4px; }

.menu { position: absolute; left: 33px; top: 41px; width: 324px; background: #fff; border-right: 1px solid #ccc; }
.item { display: flex; align-items: center; gap: 5px; width: 100%; height: 21px; padding: 0 8px 0 4px; font-size: 12px; text-align: left; white-space: nowrap; }
.item kbd { margin-left: auto; font: inherit; font-size: 13px; }
.item:disabled { color: #a6a6a6; }
.item.is-active { background: #4a8bdb; color: #fff; }
.item.sub, .item.bare { padding-left: 25px; }
.item.sub { justify-content: space-between; padding-right: 0; }
.menu hr { height: 1px; margin: 3px 4px 6px; border: 0; background: #e2e2e2; }
```
FILE: main.js
```js
const swatches = [
  "000000 1a1a1a 333333 4d4d4d 666666 808080 999999 b3b3b3 cccccc e6e6e6 ececec f2f2f2 f9f9f9 ffffff",
  "800000 ff0000 808000 ffff00 008000 00ff00 008080 00ffff 000080 0000ff 800080 ff00ff",
  "2b0000 550000 800000 aa1100 d41500 ff1c00 ff3824 ff5d55 ff8680 ffaaaa ffd5d5",
  "280b0b 501616 782121 a02c2c c83737 d35f5f de8787 e9afaf f4d7d7",
  "241c1c 483737 6c5353 916f6f ac9393 c8b7b7 e3dbdb",
  "2b1100 552200 803300 aa4400 d45500 ff6a00 ff8400 ff9c4a ffb47c ffccaa ffe6d5",
  "28170b 502d16 784421 a05a20 c87128 d38d5f deaa87 e9c6af f4e3d7",
  "241f1c 483e37 6c5d53"
].join(" ").split(" ");

const palette = document.getElementById("palette");
for (const hex of swatches) {
  const cell = document.createElement("span");
  cell.style.background = "#" + hex;
  palette.append(cell);
}

const ruler = document.getElementById("ruler");
const unit = 6.055;
const origin = 304;
let marks = "";
for (let n = -50; n <= 103; n++) {
  const x = Math.floor(origin + n * unit);
  const h = n % 10 === 0 ? 11 : n % 2 === 0 ? 5 : 4;
  marks += `<rect x="${x}" y="${13 - h}" width="1" height="${h}"/>`;
  if (n % 10 === 0) marks += `<text x="${x + 2}" y="10">${n}</text>`;
}
ruler.innerHTML = marks;
```
